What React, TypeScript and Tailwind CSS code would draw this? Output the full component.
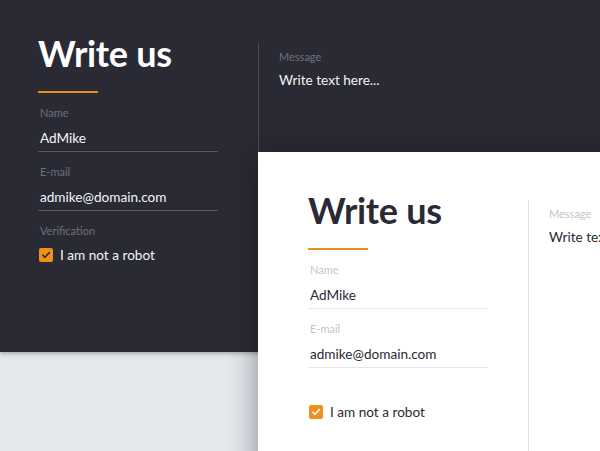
import React from 'react';

type Variant = 'dark' | 'light';

const theme = {
  dark: {
    heading: 'text-white',
    label: 'text-[#6f707b]',
    value: 'text-[#f4f4f6]',
    line: 'border-[#575863]',
    divider: 'border-[#494a55]',
    check: '#2a2a35',
  },
  light: {
    heading: 'text-[#2a2a35]',
    label: 'text-[#c4c4c9]',
    value: 'text-[#2a2a35]',
    line: 'border-[#e6e6e9]',
    divider: 'border-[#e3e3e6]',
    check: '#ffffff',
  },
};

function Field({ label, value, variant }: { label: string; value: string; variant: Variant }) {
  const t = theme[variant];
  return (
    <div className={`mt-[13px] border-b ${t.line} pb-[3px]`}>
      <div className={`pl-[2px] text-[11px] leading-[14px] ${t.label}`}>{label}</div>
      <div className={`mt-[8px] pl-[2px] text-[13.6px] leading-[20px] ${t.value}`}>{value}</div>
    </div>
  );
}

function RobotCheck({ variant }: { variant: Variant }) {
  const t = theme[variant];
  return (
    <label className="mt-[7px] flex items-center gap-[7px] pl-[1px]">
      <span className="flex h-[14px] w-[14px] items-center justify-center rounded-[2px] bg-[#f0901b]">
        <svg width="10" height="10" viewBox="0 0 10 10" fill="none">
          <path d="M1.8 5.2 4 7.3 8.3 2.6" stroke={t.check} strokeWidth="1.6" strokeLinecap="round" strokeLinejoin="round" />
        </svg>
      </span>
      <span className={`text-[13.6px] leading-[20px] ${t.value}`}>I am not a robot</span>
    </label>
  );
}

function WriteUsForm({ variant }: { variant: Variant }) {
  const t = theme[variant];
  return (
    <div className="flex h-full">
      <div className="w-[180px] shrink-0">
        <h1 className={`text-[36px] font-bold leading-[40px] tracking-[-0.3px] ${t.heading}`}>Write us</h1>
        <div className="mt-[18px] h-[2px] w-[60px] bg-[#e8901c]" />
        <div className="mt-[4px]">
          <Field label="Name" value="AdMike" variant={variant} />
          <Field label="E-mail" value="admike@domain.com" variant={variant} />
        </div>
        <div className={`mt-[13px] pl-[2px] text-[11px] leading-[14px] ${t.label} ${variant === 'light' ? 'invisible' : ''}`}>
          Verification
        </div>
        <RobotCheck variant={variant} />
      </div>
      <div className={`ml-[40px] mt-[10px] shrink-0 border-l ${t.divider} pl-[20px] pt-[7px]`}>
        <div className={`text-[11px] leading-[14px] ${t.label}`}>Message</div>
        <div className={`mt-[6px] whitespace-nowrap text-[13.6px] leading-[20px] ${t.value}`}>Write text here...</div>
      </div>
    </div>
  );
}

export default function App() {
  return (
    <div className="relative h-[451px] w-[600px] overflow-hidden bg-[#e4e7eb] font-['Lato',sans-serif]">
      <div className="h-[352px] bg-[#2a2a35] pl-[38px] pt-[33px] shadow-[0_2px_4px_rgba(0,0,0,0.25)]">
        <WriteUsForm variant="dark" />
      </div>
      <div className="absolute left-[258px] top-[152px] h-[360px] w-[420px] bg-white pl-[50px] pt-[38px] shadow-[0_0_28px_rgba(20,20,30,0.45)]">
        <WriteUsForm variant="light" />
      </div>
    </div>
  );
}
